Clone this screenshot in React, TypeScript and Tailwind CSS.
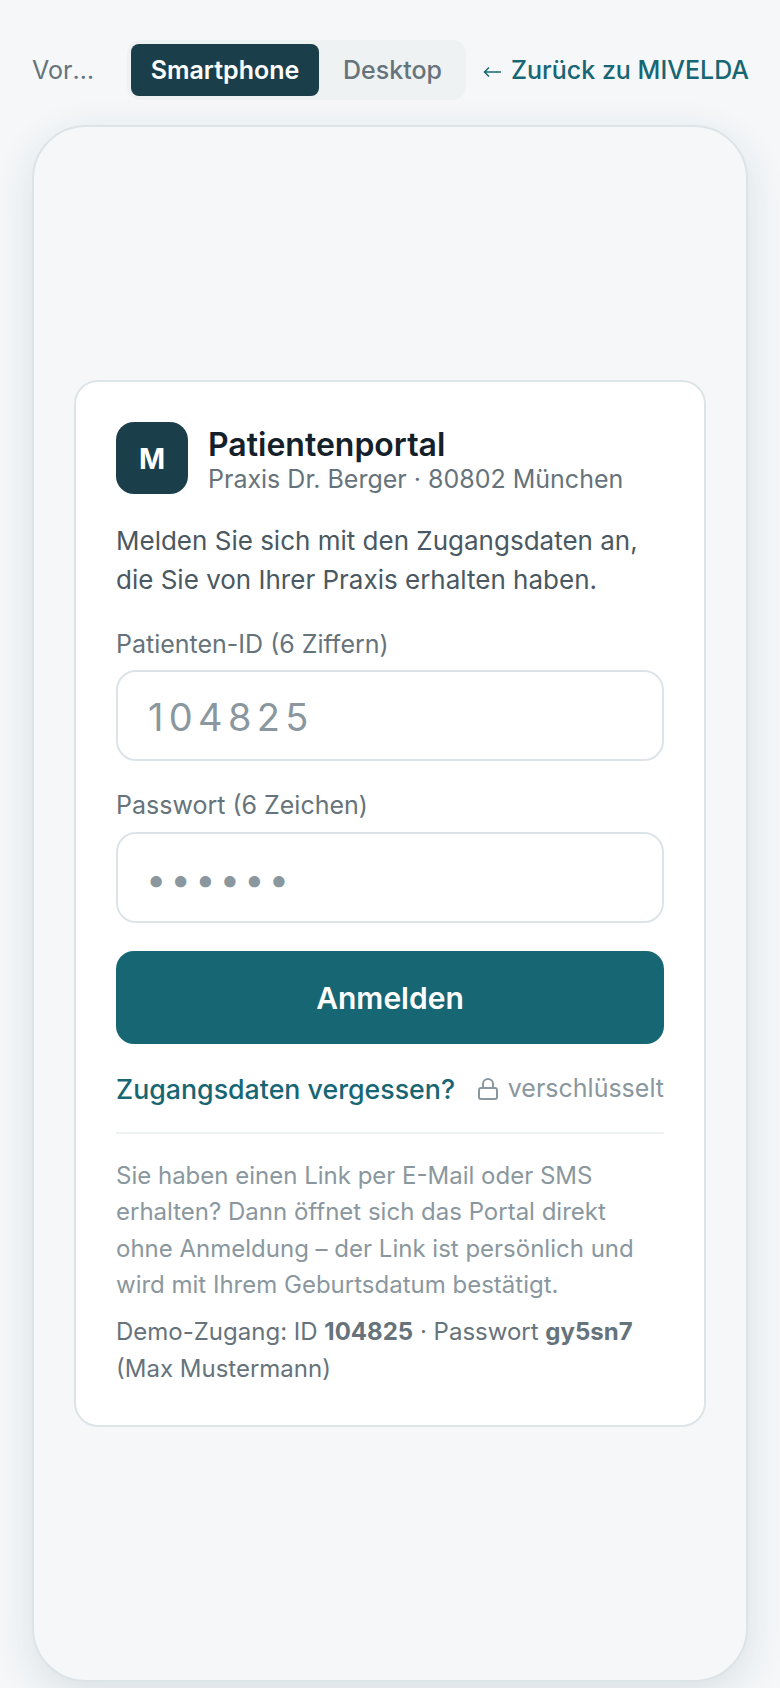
import { useState } from 'react'
import { Lock } from 'lucide-react'

export default function App() {

  const [patientId, setPatientId] = useState('')
  const [password, setPassword] = useState('')

  return (
    <div className="h-[1688px] overflow-hidden bg-[#f5f7f9] px-[32px] pt-[40px] font-['Inter',sans-serif]">

      {/* PREVIEW BAR */}

      <div className="flex h-[60px] items-center">

        <span className="w-[95px] min-w-0 shrink-0 truncate pt-[2px] pr-[30px] text-[25px] text-[#66737b]">
          Vorschau
        </span>

        <div className="flex h-[60px] w-[339px] shrink-0 gap-0 rounded-[14px] bg-[#eef2f3] p-[4px]">
          <button className="h-[52px] w-[188px] rounded-[8px] bg-[#1a3f4b] pt-[2px] text-[25px] font-semibold text-white">
            Smartphone
          </button>
          <button className="h-[52px] flex-1 rounded-[8px] pt-[2px] pl-[4px] text-[25px] font-medium text-[#66737b]">
            Desktop
          </button>
        </div>

        <a className="ml-auto -mr-[1px] flex items-center gap-[10px] whitespace-nowrap pt-[2px] text-[25px] font-medium text-[#176674]">
          <svg width="18" height="12" viewBox="0 0 18 12" fill="none" stroke="currentColor" strokeWidth="1.5" className="mt-[1px]">
            <path d="M18 6H1.5M6 1.5L1.5 6L6 10.5" />
          </svg>
          Zurück zu MIVELDA
        </a>

      </div>

      {/* PHONE FRAME */}

      <div className="mt-[25px] flex h-[1557px] w-[716px] items-center justify-center rounded-[54px] border-2 border-[#dde4e8] bg-[#f5f7f9] shadow-[0_12px_40px_rgba(26,63,75,0.12)]">

        <div className="w-[632px] rounded-[24px] border-2 border-[#dde4e8] bg-white px-[40px] pt-[40px] pb-[38px]">

          {/* PORTAL HEADER */}

          <div className="flex items-center gap-[20px]">
            <div className="flex h-[72px] w-[72px] items-center justify-center rounded-[18px] bg-[#1a3f4b] pt-[2px] text-[28px] font-bold text-white">
              M
            </div>
            <div className="pt-[4px]">
              <div className="text-[32px] leading-[38px] font-semibold text-[#14202a]">
                Patientenportal
              </div>
              <div className="text-[25px] leading-[30px] text-[#66737b]">
                Praxis Dr. Berger · 80802 München
              </div>
            </div>
          </div>

          <p className="mt-[27px] text-[26px] leading-[39px] text-[#4a5861]">
            Melden Sie sich mit den Zugangsdaten an, die Sie von Ihrer Praxis erhalten haben.
          </p>

          {/* LOGIN FORM */}

          <label className="mt-[27px] block text-[25px] leading-[36px] text-[#66737b]">
            Patienten-ID (6 Ziffern)
          </label>
          <input
            value={patientId}
            onChange={(e) => setPatientId(e.target.value)}
            placeholder="104825"
            className="mt-[8px] block h-[91px] w-full rounded-[20px] border-2 border-[#dde4e8] px-[30px] pt-[3px] text-[38px] tracking-[0.14em] outline-none placeholder:text-[#8a979e]"
          />

          <label className="mt-[26px] block text-[25px] leading-[36px] text-[#66737b]">
            Passwort (6 Zeichen)
          </label>
          <input
            type="password"
            value={password}
            onChange={(e) => setPassword(e.target.value)}
            placeholder="••••••"
            className="mt-[9px] block h-[91px] w-full rounded-[20px] border-2 border-[#dde4e8] px-[28px] pt-[3px] text-[36px] tracking-[0.12em] outline-none placeholder:text-[#8a979e]"
          />

          <button className="mt-[28px] block h-[93px] w-full rounded-[18px] bg-[#176674] pt-[3px] text-[30px] font-semibold text-white">
            Anmelden
          </button>

          <div className="mt-[25px] flex items-center justify-between">
            <a className="text-[26.75px] font-medium text-[#176674]">
              Zugangsdaten vergessen?
            </a>
            <span className="flex items-center gap-[8px] text-[25px] text-[#8a979e]">
              <Lock size={24} />
              verschlüsselt
            </span>
          </div>

          {/* HINTS */}

          <div className="mt-[23px] border-t-2 border-[#eef2f3] pt-[24px]">
            <p className="text-[24px] leading-[36.4px] text-[#8a979e]">
              Sie haben einen Link per E-Mail oder SMS erhalten? Dann öffnet sich das Portal direkt ohne Anmeldung – der Link ist persönlich und wird mit Ihrem Geburtsdatum bestätigt.
            </p>
            <p className="mt-[11px] text-[24px] leading-[36.4px] text-[#66737b]">
              Demo-Zugang: ID <b className="font-bold">104825</b> · Passwort <b className="font-bold">gy5sn7</b> (Max Mustermann)
            </p>
          </div>

        </div>

      </div>

    </div>
  )
}
